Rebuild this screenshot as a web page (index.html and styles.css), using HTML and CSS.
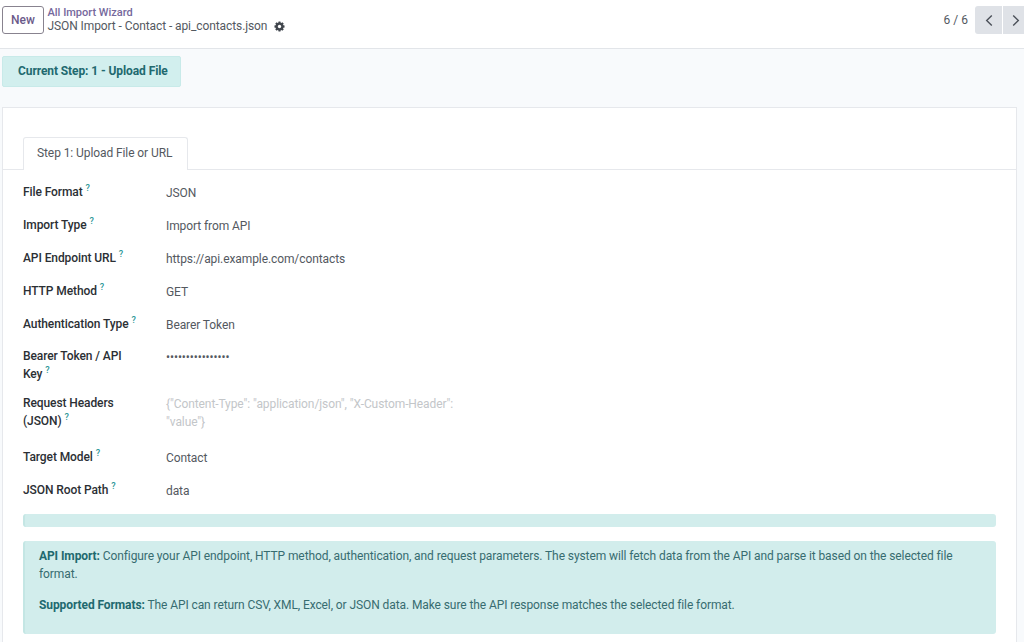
FILE: index.html
```html
<!DOCTYPE html>
<html lang="en">
<head>
  <meta charset="UTF-8">
  <meta name="viewport" content="width=device-width, initial-scale=1.0">
  <title>JSON Import - Contact</title>
  <link rel="stylesheet" href="styles.css">
</head>
<body>
  <header class="control-panel">
    <button class="btn-new">New</button>
    <div class="breadcrumb">
      <a class="breadcrumb-parent" href="#">All Import Wizard</a>
      <div class="breadcrumb-current">
        <span>JSON Import - Contact - api_contacts.json</span>
        <svg class="gear" viewBox="0 0 12 12">
          <g fill="#41464d">
            <rect x="4.7" y="0.5" width="2.6" height="11" rx="0.5"/>
            <rect x="4.7" y="0.5" width="2.6" height="11" rx="0.5" transform="rotate(45 6 6)"/>
            <rect x="4.7" y="0.5" width="2.6" height="11" rx="0.5" transform="rotate(90 6 6)"/>
            <rect x="4.7" y="0.5" width="2.6" height="11" rx="0.5" transform="rotate(135 6 6)"/>
            <circle cx="6" cy="6" r="4.2"/>
          </g>
          <circle cx="6" cy="6" r="1.8" fill="#fff"/>
        </svg>
      </div>
    </div>
    <div class="pager">
      <span class="pager-count">6 / 6</span>
      <button class="pager-btn"><svg viewBox="0 0 8 14"><path d="M7 1.5L1.5 7L7 12.5"/></svg></button>
      <button class="pager-btn"><svg viewBox="0 0 8 14"><path d="M1 1.5L6.5 7L1 12.5"/></svg></button>
    </div>
  </header>

  <main>
    <div class="current-step">Current Step: 1 - Upload File</div>

    <section class="sheet">
      <nav class="tabs">
        <a class="tab" href="#">Step 1: Upload File or URL</a>
      </nav>
      <div class="sheet-body">
        <div class="field">
          <label>File Format <sup>?</sup></label>
          <span class="value">JSON</span>
        </div>
        <div class="field">
          <label>Import Type <sup>?</sup></label>
          <span class="value">Import from API</span>
        </div>
        <div class="field">
          <label>API Endpoint URL <sup>?</sup></label>
          <span class="value">https://api.example.com/contacts</span>
        </div>
        <div class="field">
          <label>HTTP Method <sup>?</sup></label>
          <span class="value">GET</span>
        </div>
        <div class="field">
          <label>Authentication Type <sup>?</sup></label>
          <span class="value">Bearer Token</span>
        </div>
        <div class="field field-token">
          <label>Bearer Token / API Key <sup>?</sup></label>
          <span class="value password">••••••••••••••••</span>
        </div>
        <div class="field field-headers">
          <label>Request Headers (JSON) <sup>?</sup></label>
          <span class="value placeholder">{"Content-Type": "application/json", "X-Custom-Header": "value"}</span>
        </div>
        <div class="field">
          <label>Target Model <sup>?</sup></label>
          <span class="value">Contact</span>
        </div>
        <div class="field">
          <label>JSON Root Path <sup>?</sup></label>
          <span class="value">data</span>
        </div>

        <div class="alert alert-empty"></div>
        <div class="alert alert-info">
          <p><strong>API Import:</strong> Configure your API endpoint, HTTP method, authentication, and request parameters. The system will fetch data from the API and parse it based on the selected file format.</p>
          <p><strong>Supported Formats:</strong> The API can return CSV, XML, Excel, or JSON data. Make sure the API response matches the selected file format.</p>
        </div>
      </div>
    </section>
  </main>
</body>
</html>
```
FILE: styles.css
```css
* {
  box-sizing: border-box;
}

body {
  margin: 0;
  height: 642px;
  overflow: hidden;
  background-color: #f8fafc;
  color: #54595f;
  font-family: Roboto, sans-serif;
  font-size: 12px;
  letter-spacing: -0.09px;
  line-height: 18px;
}

a {
  text-decoration: none;
}

.control-panel {
  display: flex;
  align-items: flex-start;
  height: 49px;
  padding: 6px 0 0 2px;
  background-color: #fff;
  border-bottom: 1px solid #e2e5e9;
}

.btn-new {
  width: 42px;
  height: 28px;
  padding: 0 0 1px;
  background-color: #fff;
  border: 1px solid #88838f;
  border-radius: 3px;
  color: #6b5a8a;
  font-family: inherit;
  font-size: 12px;
  font-weight: 500;
}

.breadcrumb {
  margin-left: 3.5px;
  line-height: 14px;
}

.breadcrumb-parent {
  display: block;
  height: 13px;
  color: #75689c;
  font-size: 11px;
  font-weight: 500;
  letter-spacing: 0;
}

.breadcrumb-current {
  display: flex;
  align-items: center;
  gap: 7px;
}

.gear {
  width: 11px;
  height: 11px;
}

.pager {
  display: flex;
  align-items: center;
  margin-left: auto;
}

.pager-count {
  margin-right: 7px;
  padding-bottom: 1px;
  letter-spacing: 0;
}

.pager-btn {
  display: flex;
  align-items: center;
  justify-content: center;
  width: 27px;
  height: 28px;
  padding: 0;
  border: none;
  border-radius: 3px 0 0 3px;
  background-color: #dfe2e7;
}

.pager-btn + .pager-btn {
  width: 21px;
  margin-left: 1px;
  padding-left: 5px;
  border-radius: 0;
}

.pager-btn svg {
  width: 8px;
  height: 13px;
  fill: none;
  stroke: #4b5058;
  stroke-width: 1.5;
}

.current-step {
  width: 179px;
  height: 31px;
  margin: 7px 0 20px 2px;
  padding: 5px 0 0 15px;
  background-color: #d2efee;
  border: 1px solid #c8eae9;
  border-radius: 2px;
  color: #21696f;
  font-weight: 700;
}

.sheet {
  width: 1015px;
  height: 560px;
  margin-left: 2px;
  padding-top: 29px;
  background-color: #fff;
  border: 1px solid #e6e8ec;
}

.tabs {
  display: flex;
  height: 33px;
  padding-left: 20px;
  border-bottom: 1px solid #e6e8ec;
}

.tab {
  width: 165px;
  height: 33px;
  padding: 6px 0 0 13px;
  background-color: #fff;
  border: 1px solid #e6e8ec;
  border-bottom: none;
  border-radius: 3px 3px 0 0;
  color: #54595f;
}

.sheet-body {
  padding: 12px 20px 0;
}

.field {
  display: grid;
  grid-template-columns: 120px 300px;
  column-gap: 23px;
  height: 33px;
}

.field-token {
  height: 46px;
}

.field-headers {
  height: 54px;
}

label {
  padding-top: 1px;
  color: #2b2f34;
  font-weight: 500;
}

.field-token label {
  padding-top: 0;
}

sup {
  color: #2a9696;
  font-size: 9px;
  font-weight: 500;
  line-height: 0;
}

.value {
  padding-top: 2px;
}

.password {
  padding-top: 1px;
}

.placeholder {
  color: #c3c6c9;
}

.alert {
  background-color: #d2edec;
  border-left: 2px solid #c4e6e4;
  border-radius: 3px;
  color: #376c70;
}

.alert-empty {
  height: 13px;
  margin-top: 1px;
}

.alert-info {
  height: 93px;
  margin-top: 14px;
  padding: 6px 14px;
}

.alert p {
  margin: 0 0 13px;
}

.alert strong {
  color: #21696f;
  font-weight: 700;
}
```
